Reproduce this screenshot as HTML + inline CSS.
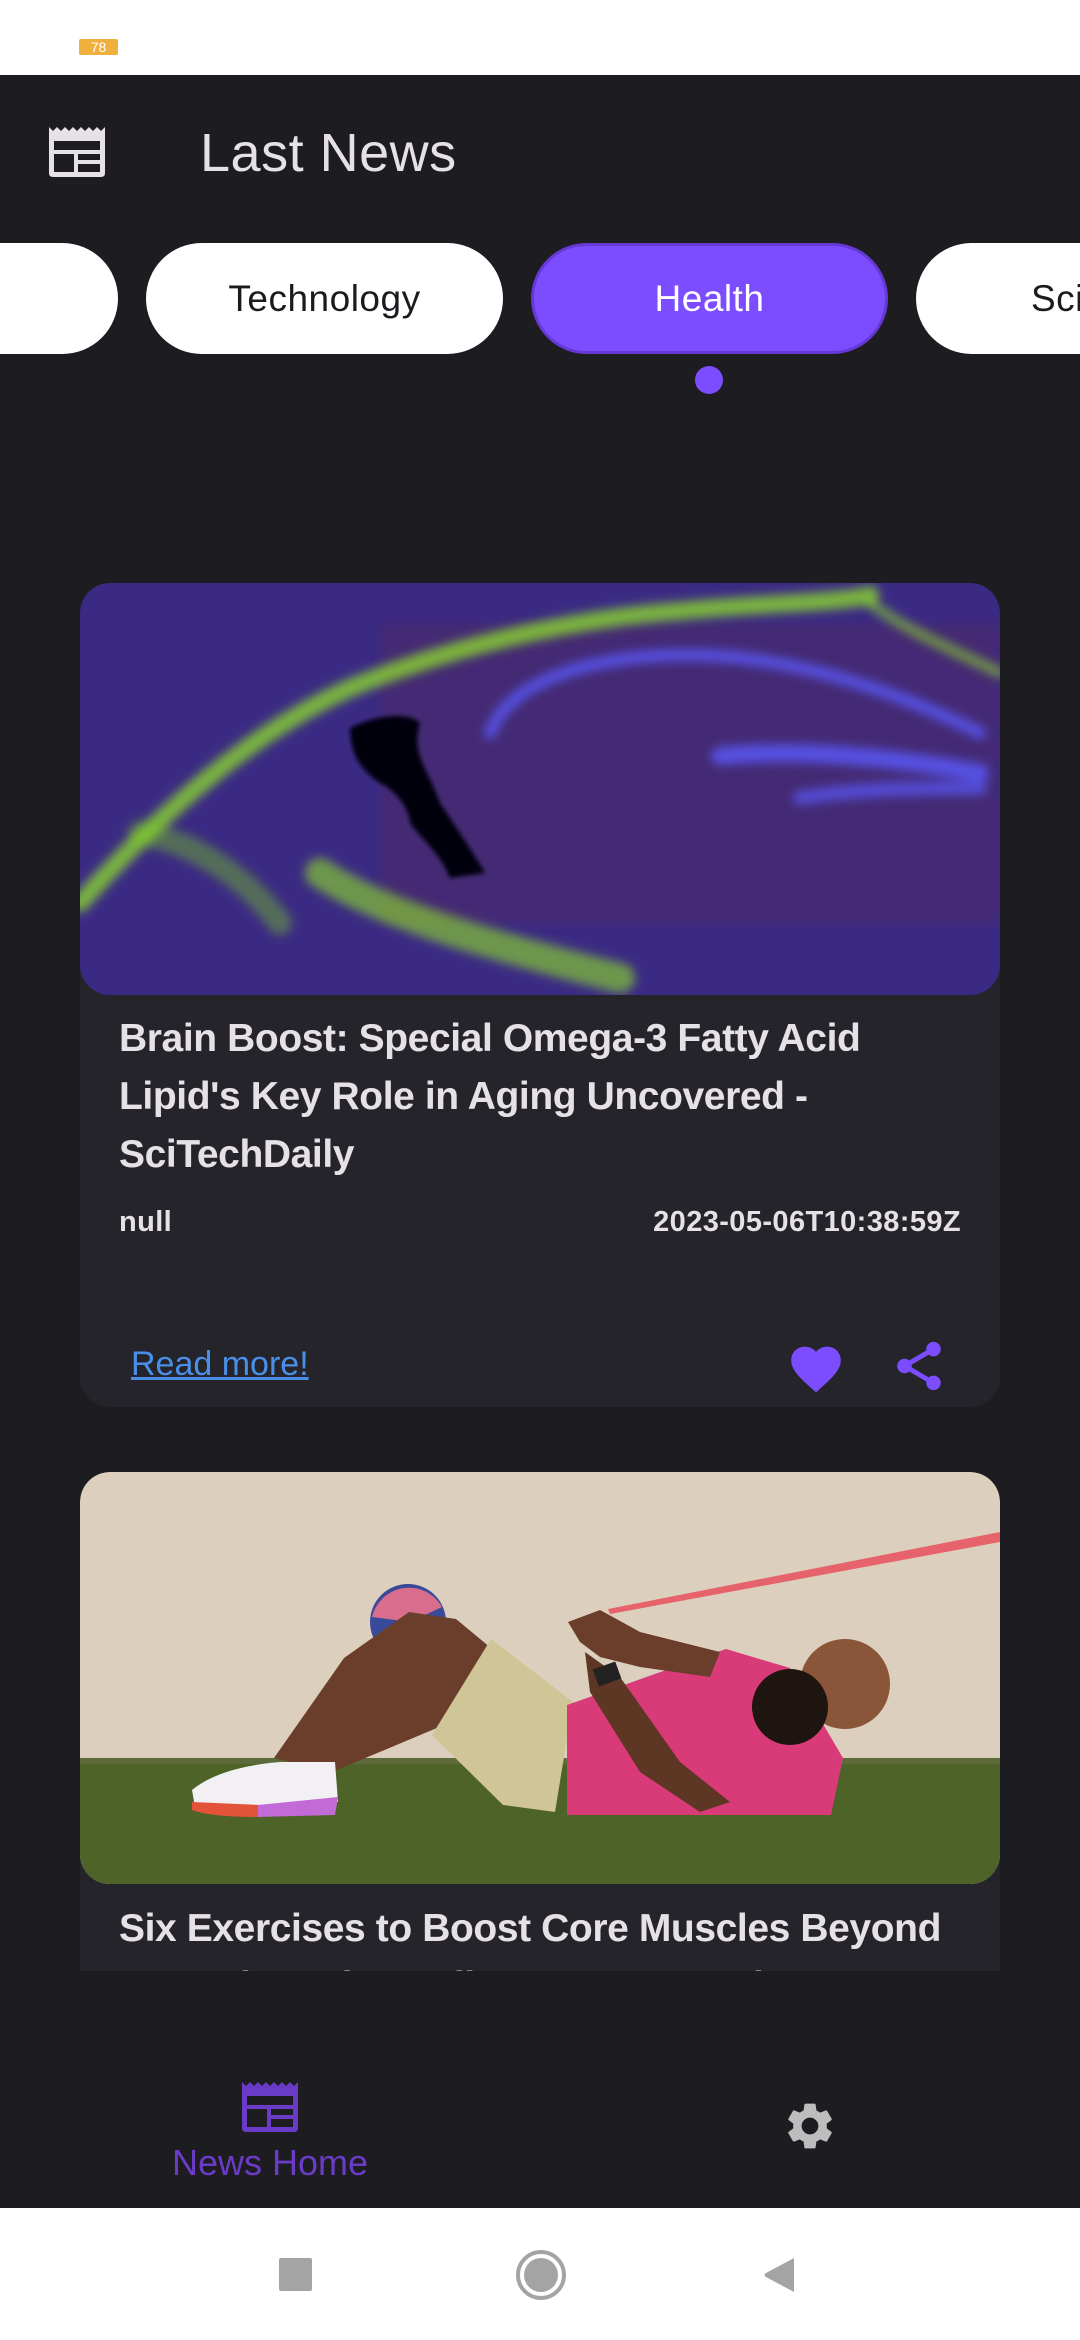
<!DOCTYPE html>
<html><head><meta charset="utf-8">
<style>
*{margin:0;padding:0;box-sizing:border-box}
html,body{width:1080px;height:2340px;overflow:hidden}
body{background:#1d1c21;position:relative;font-family:"Liberation Sans",sans-serif}
#wrap{position:absolute;left:0;top:0;width:1080px;height:2340px;overflow:hidden}
.abs{position:absolute}
.status{left:0;top:0;width:1080px;height:75px;background:#fff}
.badge{left:79px;top:39px;width:39px;height:16px;background:#f1b03d;color:#fff;font-size:14px;line-height:16px;text-align:center;border-radius:2px}
.title{left:200px;top:118px;font-size:54px;color:#e6e1e6;line-height:70px;letter-spacing:0.5px}
.chip{top:243px;height:111px;border-radius:56px;background:#fff;color:#1b1b1f;font-size:37px;line-height:111px;text-align:center;letter-spacing:0.5px;overflow:hidden;white-space:nowrap}
.card{left:80px;width:920px;background:#25242b;border-radius:30px;overflow:hidden}
.ctitle{left:39px;font-size:39px;font-weight:bold;color:#e6e1e6;line-height:58px;width:870px;letter-spacing:-0.4px}
.meta{font-size:29px;font-weight:bold;color:#e6e1e6;letter-spacing:0.4px}
.nav{left:0;top:2208px;width:1080px;height:132px;background:#fff}
</style></head><body><div id="wrap">
<div class="abs status"></div>
<div class="abs badge">78</div>

<svg class="abs" style="left:49px;top:127px" width="56" height="50" viewBox="0 0 56 50">
<path d="M0 0 L4 4 L8 0 L12 4 L16 0 L20 4 L24 0 L28 4 L32 0 L36 4 L40 0 L44 4 L48 0 L52 4 L56 0 V46 Q56 50 52 50 H4 Q0 50 0 46 Z" fill="#e6e1e6"/>
<rect x="5" y="14" width="46" height="9" fill="#1d1c21"/>
<rect x="5" y="27" width="20" height="18" fill="#1d1c21"/>
<rect x="29" y="27" width="22" height="6" fill="#1d1c21"/>
<rect x="29" y="37" width="22" height="8" fill="#1d1c21"/>
</svg>
<div class="abs title">Last News</div>

<div class="abs chip" style="left:-120px;width:238px"></div>
<div class="abs chip" style="left:146px;width:357px">Technology</div>
<div class="abs chip" style="left:531px;width:357px;background:#7c4dff;color:#fff;border:3px solid #6639d6;line-height:105px">Health</div>
<div class="abs chip" style="left:916px;width:164px;border-radius:56px 0 0 56px;text-align:left;padding-left:115px">Science</div>
<div class="abs" style="left:695px;top:366px;width:28px;height:28px;border-radius:50%;background:#7c4dff"></div>

<!-- card 1 -->
<div class="abs card" style="top:583px;height:824px">
<svg width="920" height="412" viewBox="0 0 920 412" style="display:block;border-radius:30px">
<defs><filter id="b1"><feGaussianBlur stdDeviation="5"/></filter><filter id="b2"><feGaussianBlur stdDeviation="2"/></filter></defs>
<rect width="920" height="412" fill="#3b2a84"/>
<rect x="300" y="40" width="620" height="300" fill="#4a2a6e" opacity=".7" filter="url(#b1)"/>
<g filter="url(#b1)" fill="none" stroke-linecap="round">
<path d="M0 320 C80 230 170 150 270 105 C380 60 500 35 600 28 C680 20 760 20 790 12" stroke="#8fe02a" stroke-width="18" opacity=".75"/>
<path d="M790 20 C830 50 880 70 920 90" stroke="#8fe02a" stroke-width="10" opacity=".6"/>
<path d="M240 290 C300 330 400 360 540 395" stroke="#8fe02a" stroke-width="30" opacity=".6"/>
<path d="M60 250 C120 260 170 300 200 340" stroke="#7ad21f" stroke-width="24" opacity=".4"/>
<path d="M410 150 C430 95 520 70 620 72 C720 75 820 110 900 150" stroke="#5a5aff" stroke-width="12" opacity=".8"/>
<path d="M640 173 C720 165 820 175 900 190" stroke="#5a5aff" stroke-width="18" opacity=".8"/>
<path d="M720 215 C780 205 850 205 900 205" stroke="#5a5aff" stroke-width="14" opacity=".7"/>
</g>
<path d="M270 145 C300 130 330 130 340 140 C330 170 350 190 360 220 C380 250 400 280 405 290 L370 295 C360 270 345 260 330 240 C330 230 320 210 300 200 C285 190 270 175 270 145 Z" fill="#05030f" filter="url(#b2)"/>
</svg>
<div class="abs ctitle" style="top:427px">Brain Boost: Special Omega-3 Fatty Acid Lipid's Key Role in Aging Uncovered - SciTechDaily</div>
<div class="abs meta" style="left:39px;top:623px">null</div>
<div class="abs meta" style="right:39px;top:623px">2023-05-06T10:38:59Z</div>
<div class="abs" style="left:51px;top:762px;font-size:34px;color:#4a8fe7;text-decoration:underline">Read more!</div>
<svg class="abs" style="left:706px;top:755px" width="60" height="57" viewBox="0 0 24 23"><path d="M12 22 L10.5 20.6 C5.4 16 2 12.9 2 9 C2 5.9 4.4 3.5 7.5 3.5 C9.2 3.5 10.9 4.3 12 5.6 C13.1 4.3 14.8 3.5 16.5 3.5 C19.6 3.5 22 5.9 22 9 C22 12.9 18.6 16 13.5 20.6 Z" fill="#7c4dff"/></svg>
<svg class="abs" style="left:810px;top:753px" width="58" height="60" viewBox="0 0 24 24"><circle cx="18" cy="5" r="3" fill="#7c4dff"/><circle cx="6" cy="12" r="3" fill="#7c4dff"/><circle cx="18" cy="19" r="3" fill="#7c4dff"/><path d="M18 5 L6 12 L18 19" stroke="#7c4dff" stroke-width="2" fill="none"/></svg>
</div>

<!-- card 2 -->
<div class="abs card" style="top:1472px;height:499px;border-radius:30px 30px 0 0">
<svg width="920" height="412" viewBox="0 0 920 412" style="display:block;border-radius:30px">
<rect width="920" height="412" fill="#ddcfbe"/>
<rect y="288" width="920" height="124" fill="#4e6327"/>
<rect y="286" width="920" height="6" fill="#5d6b3a"/>
<path d="M528 137 L920 60 L920 70 L530 142 Z" fill="#e6636b"/>
<circle cx="328" cy="150" r="38" fill="#3a4a9a"/>
<path d="M292 145 A38 38 0 0 1 362 135 L330 150 Z" fill="#d96d8e"/>
<path d="M194 286 L264 186 L329 140 L376 147 L423 186 L364 253 L252 300 Z" fill="#6a3e2a"/>
<path d="M352 263 L411 167 L493 230 L475 340 L423 333 Z" fill="#cfc596"/>
<path d="M487 233 L646 177 L710 196 L763 286 L751 343 L487 343 Z" fill="#d93a78"/>
<path d="M488 150 L520 138 L560 160 L640 180 L630 205 L560 195 L520 185 L500 170 Z" fill="#6a3e2a"/>
<path d="M505 180 L540 205 L600 290 L650 330 L620 340 L560 300 L510 220 Z" fill="#5e3624"/>
<rect x="515" y="193" width="24" height="18" fill="#222" transform="rotate(-20 527 202)"/>
<circle cx="765" cy="212" r="45" fill="#8a5538"/>
<ellipse cx="710" cy="235" rx="38" ry="38" fill="#1e1410"/>
<path d="M112 318 Q140 295 200 290 L255 290 L258 330 Q200 345 115 335 Z" fill="#f2f0f3"/>
<path d="M112 330 L180 333 L178 345 Q130 345 112 338 Z" fill="#e2533a"/>
<path d="M178 333 L258 325 L255 343 L178 345 Z" fill="#c26ad6"/>
</svg>
<div class="abs ctitle" style="top:428px">Six Exercises to Boost Core Muscles Beyond Your Abs - The Well Source Journal</div>
</div>
<div class="abs" style="left:0;top:1971px;width:1080px;height:237px;background:#1d1c21"></div>

<!-- bottom nav -->
<svg class="abs" style="left:242px;top:2082px" width="56" height="50" viewBox="0 0 56 50">
<path d="M0 0 L4 4 L8 0 L12 4 L16 0 L20 4 L24 0 L28 4 L32 0 L36 4 L40 0 L44 4 L48 0 L52 4 L56 0 V46 Q56 50 52 50 H4 Q0 50 0 46 Z" fill="#6a3bc7"/>
<rect x="5" y="14" width="46" height="9" fill="#1d1c21"/>
<rect x="5" y="27" width="20" height="18" fill="#1d1c21"/>
<rect x="29" y="27" width="22" height="6" fill="#1d1c21"/>
<rect x="29" y="37" width="22" height="8" fill="#1d1c21"/>
</svg>
<div class="abs" style="left:150px;top:2142px;width:240px;text-align:center;font-size:36px;color:#6a3bc7">News Home</div>
<svg class="abs" style="left:782px;top:2098px" width="56" height="56" viewBox="0 0 24 24"><path fill="#bdbdbd" d="M19.14 12.94c.04-.3.06-.61.06-.94 0-.32-.02-.64-.07-.94l2.030-1.58a.49.49 0 0 0 .12-.61l-1.92-3.32a.488.488 0 0 0-.59-.22l-2.39.96c-.5-.38-1.03-.7-1.62-.94l-.36-2.54a.484.484 0 0 0-.48-.41h-3.84c-.24 0-.43.17-.47.41l-.36 2.54c-.59.24-1.130.57-1.62.94l-2.39-.96c-.22-.08-.47 0-.59.22L2.74 8.87c-.12.21-.08.47.12.61l2.03 1.58c-.05.3-.09.63-.09.94s.02.64.07.94l-2.03 1.58a.49.49 0 0 0-.12.61l1.92 3.32c.12.22.37.29.59.22l2.39-.96c.5.38 1.03.7 1.62.94l.36 2.54c.05.24.24.41.48.41h3.84c.24 0 .44-.17.47-.41l.36-2.54c.59-.24 1.13-.56 1.62-.94l2.39.96c.22.08.47 0 .59-.22l1.92-3.32c.12-.22.07-.47-.12-.61l-2.01-1.58zM12 15.6c-1.98 0-3.6-1.62-3.6-3.6s1.62-3.6 3.6-3.6 3.6 1.62 3.6 3.6-1.62 3.6-3.6 3.6z"/></svg>

<div class="abs nav"></div>
<div class="abs" style="left:279px;top:2258px;width:33px;height:33px;background:#a4a4a4;border-radius:2px"></div>
<div class="abs" style="left:516px;top:2250px;width:50px;height:50px;border-radius:50%;border:4px solid #a4a4a4;padding:4px"><div style="width:100%;height:100%;border-radius:50%;background:#a4a4a4"></div></div>
<svg class="abs" style="left:762px;top:2256px" width="34" height="38" viewBox="0 0 34 38"><path d="M32 2 L32 36 L4 21 Q1 19 4 17 Z" fill="#a4a4a4"/></svg>
</div></body></html>
